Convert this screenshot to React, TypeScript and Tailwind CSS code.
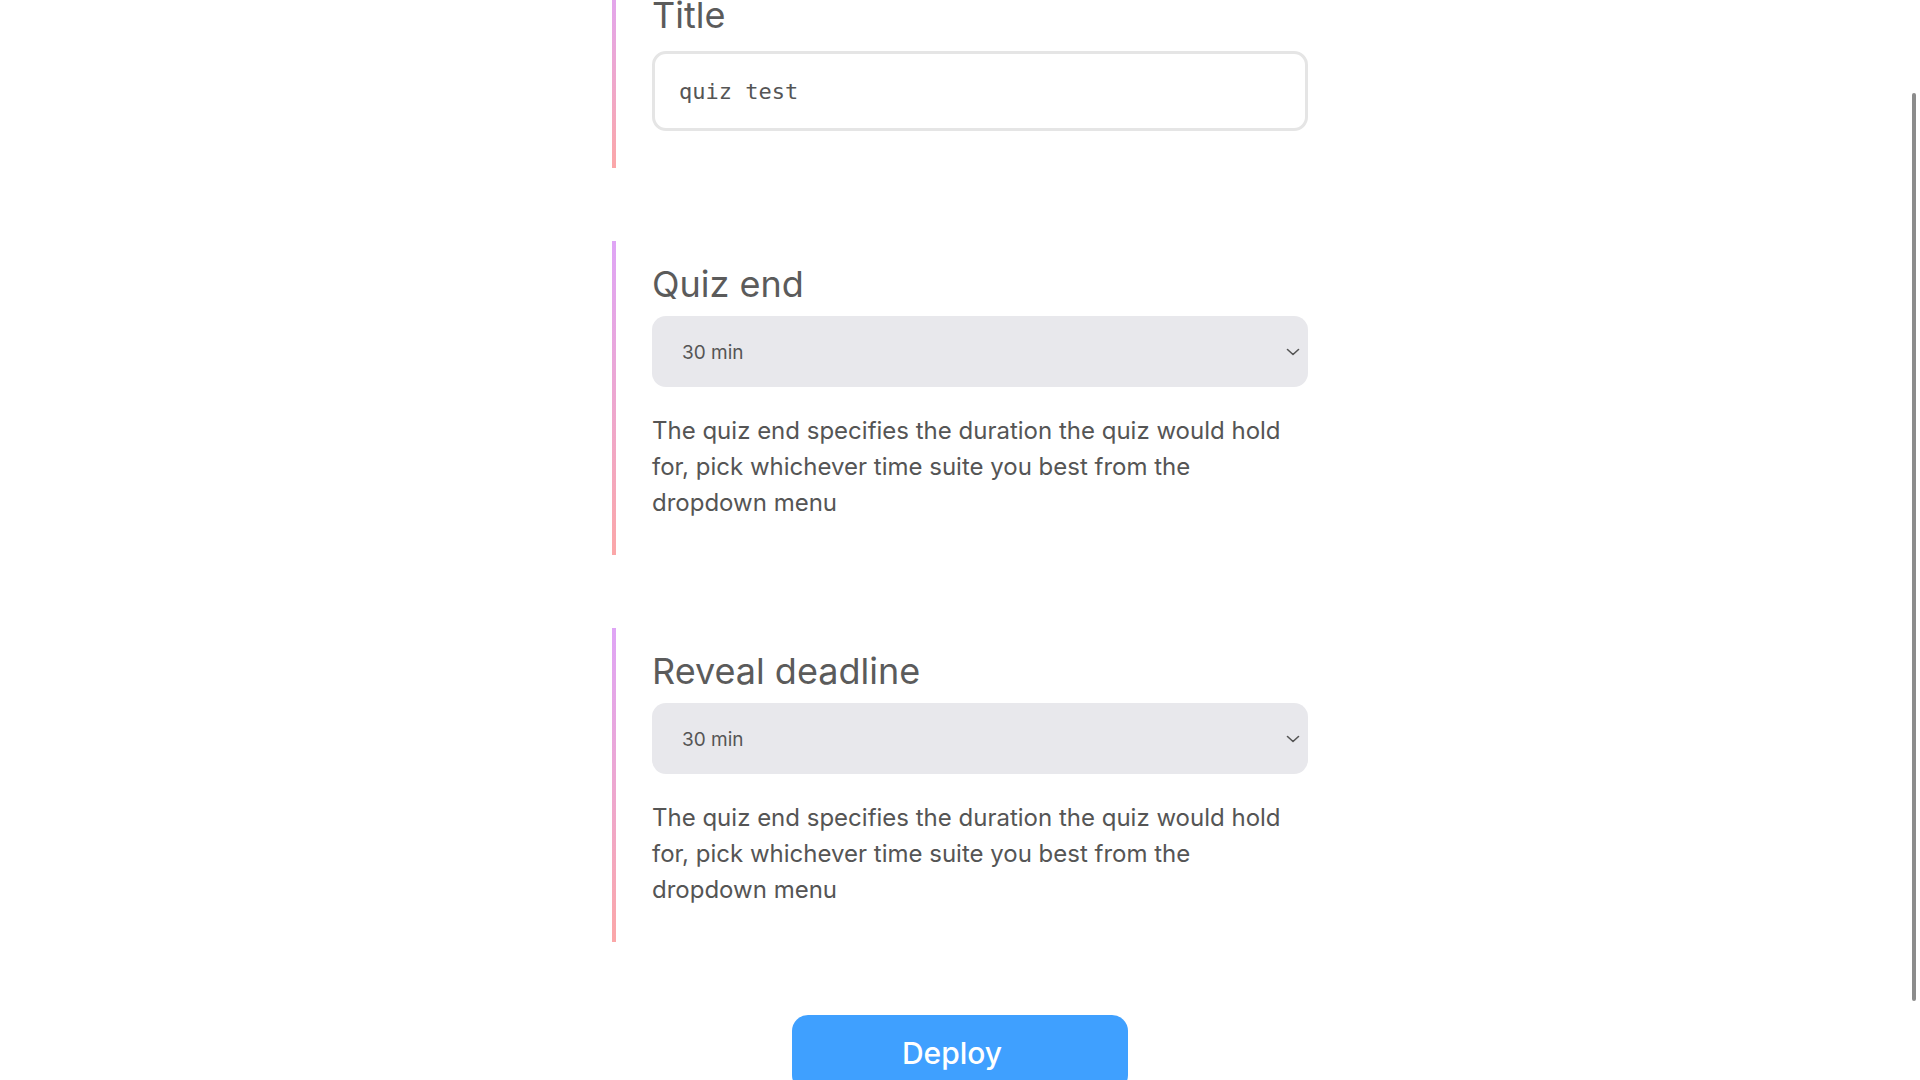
import React from "react";

const desc =
  "The quiz end specifies the duration the quiz would hold for, pick whichever time suite you best from the dropdown menu";

function Chevron() {
  return (
    <svg width="14" height="8" viewBox="0 0 14 8" fill="none" className="shrink-0">
      <path d="M1.5 1.5 L7 6.5 L12.5 1.5" stroke="#555" strokeWidth="1.6" strokeLinecap="round" strokeLinejoin="round" />
    </svg>
  );
}

function Section({ children, className = "" }: { children: React.ReactNode; className?: string }) {
  return (
    <div className={"flex w-[696px] " + className}>
      <div className="w-[4px] shrink-0 bg-gradient-to-b from-[#dfa5f6] to-[#fba7a8]" />
      <div className="flex-1 pl-[36px] pt-[23px]">{children}</div>
    </div>
  );
}

function SelectSection({ title }: { title: string }) {
  return (
    <Section className="h-[314px]">
      <h2 className="h-[40px] text-[36px] leading-[40px] font-normal text-[#5b5b5b]">{title}</h2>
      <div className="mt-3 flex h-[71px] items-center justify-between rounded-[14px] bg-[#e8e8ec] pl-[30px] pr-[8px]">
        <span className="pt-[4px] text-[19px] text-[#555555]">30 min</span>
        <Chevron />
      </div>
      <p className="mt-[26px] text-[24px] leading-[36px] text-[#555555]">{desc}</p>
    </Section>
  );
}

export default function App() {
  return (
    <div
      className="relative h-[1080px] w-full overflow-hidden bg-white"
      style={{ fontFamily: "Inter, 'Noto Sans', sans-serif" }}
    >
      <div className="-mt-[28px] flex flex-col items-center gap-[73px]">
        <Section className="h-[196px]">
          <h2 className="h-[40px] text-[36px] leading-[40px] font-normal text-[#5b5b5b]">Title</h2>
          <div className="mt-4 flex h-[80px] items-center rounded-[14px] border-[3px] border-[#e5e5e5] bg-white pl-[24px]">
            <span
              className="text-[22px] text-[#555555]"
              style={{ fontFamily: "'DejaVu Sans Mono', monospace" }}
            >
              quiz test
            </span>
          </div>
        </Section>
        <SelectSection title="Quiz end" />
        <SelectSection title="Reveal deadline" />
        <button className="flex h-[76px] w-[336px] items-center justify-center rounded-[16px] bg-[#3fa0ff] pr-[16px] text-[30px] font-medium text-white">
          Deploy
        </button>
      </div>
      <div className="absolute right-[4px] top-[93px] h-[908px] w-[4px] rounded-full bg-[#8c8c8c]" />
    </div>
  );
}
